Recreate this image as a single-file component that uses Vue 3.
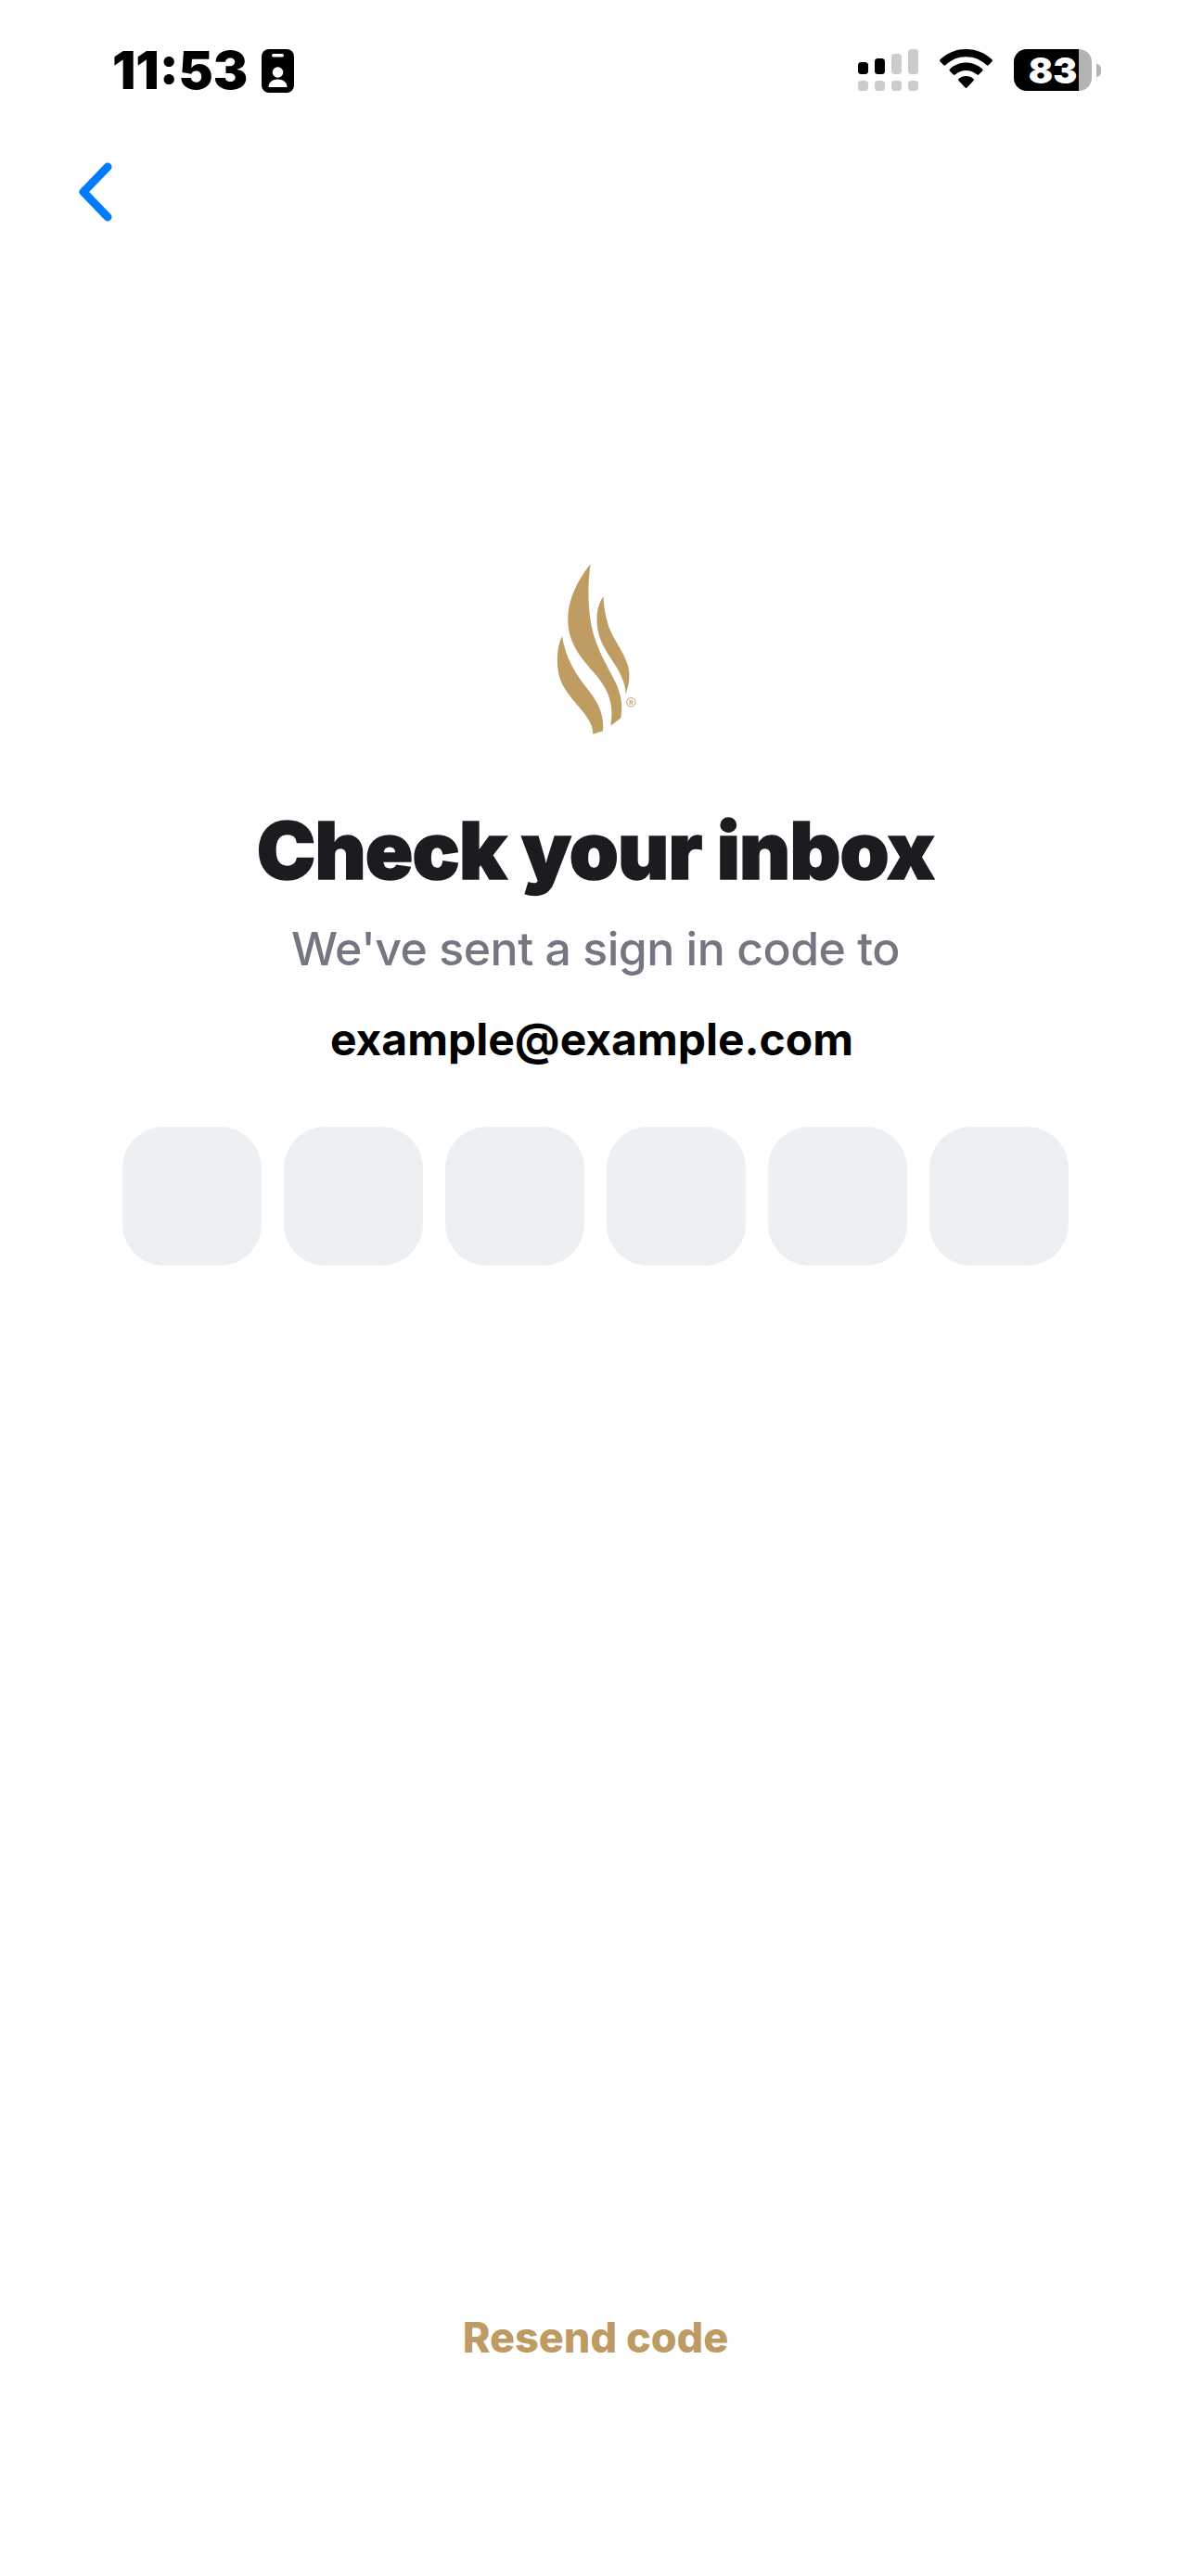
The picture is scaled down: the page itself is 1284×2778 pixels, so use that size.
<script setup>
const boxes = [1, 2, 3, 4, 5, 6]
</script>

<template>
  <div class="page">
    <header class="status">
      <div class="status-left">
        <span class="time">11:53</span>
        <svg class="id-icon" width="35" height="47" viewBox="0 0 35 47">
          <rect width="35" height="47" rx="8" fill="#000" />
          <rect x="11" y="5" width="13" height="3.4" rx="1.7" fill="#fff" />
          <circle cx="17.5" cy="25" r="5.8" fill="#fff" />
          <path d="M7.5 41c0-5.500 4.500-8.500 10-8.500s10 3 10 8.500z" fill="#fff" />
        </svg>
      </div>
      <div class="status-right">
        <svg class="signal" width="65" height="45" viewBox="0 0 65 45">
          <rect x="0" y="14" width="11" height="13" rx="3.500" fill="#000" />
          <rect x="18" y="10" width="11" height="17" rx="3.500" fill="#000" />
          <rect x="36" y="5" width="11" height="22" rx="3.500" fill="#ccc" />
          <rect x="54" y="0" width="11" height="27" rx="3.500" fill="#ccc" />
          <rect x="0" y="34" width="11" height="11" rx="3.500" fill="#ccc" />
          <rect x="18" y="34" width="11" height="11" rx="3.500" fill="#ccc" />
          <rect x="36" y="34" width="11" height="11" rx="3.500" fill="#ccc" />
          <rect x="54" y="34" width="11" height="11" rx="3.500" fill="#ccc" />
        </svg>
        <svg class="wifi" width="57" height="42" viewBox="0 0 57 42">
          <path d="M28.500 0C17.500 0 7.800 4.300 0.500 11.200c-.6.600-.6 1.400 0 2l3.800 4c.6.600 1.400.6 2 0C12.200 11.500 20 8.200 28.500 8.200s16.300 3.300 22.200 9c.6.600 1.400.6 2 0l3.800-4c.6-.6.6-1.400 0-2C49.200 4.300 39.500 0 28.500 0z" fill="#000" />
          <path d="M28.500 14.500c-6.900 0-13 2.700-17.600 7-.6.600-.6 1.300 0 1.900l3.900 4c.5.500 1.300.6 1.900.1 3.100-2.800 7.300-4.600 11.800-4.600s8.700 1.800 11.800 4.600c.6.500 1.400.4 1.900-.1l3.900-4c.6-.6.600-1.300 0-1.900-4.600-4.300-10.700-7-17.600-7z" fill="#000" />
          <path d="M28.500 29c-3.100 0-5.900 1.200-8 3.100-.6.600-.6 1.300 0 1.900l7 7.500c.6.600 1.400.6 2 0l7-7.500c.6-.6.600-1.300 0-1.900-2.100-1.900-4.900-3.100-8-3.100z" fill="#000" />
        </svg>
        <div class="battery">
          <div class="battery-body">
            <div class="battery-fill"></div>
            <span class="battery-num">83</span>
          </div>
          <div class="battery-cap"></div>
        </div>
      </div>
    </header>

    <button class="back" aria-label="Back">
      <svg width="40" height="64" viewBox="0 0 40 64">
        <path d="M34 5 L8 32 L34 59" fill="none" stroke="#007aff" stroke-width="9" stroke-linecap="round" stroke-linejoin="round" />
      </svg>
    </button>

    <main class="content">
      <svg class="logo" width="160" height="220" viewBox="0 0 480 660">
        <path d="M230 55C190 105 155 170 157 240C158 310 200 360 240 405C280 452 308 495 295 578L328 553C334 510 330 480 312 440C290 395 262 350 242 290C222 225 218 130 230 55Z" fill="#be9c62" />
        <path d="M138 288C122 320 118 370 128 415C140 465 185 505 215 545C230 565 238 585 238 605L270 595C274 550 260 510 225 465C185 415 150 365 138 288Z" fill="#be9c62" />
        <path d="M272 160C252 185 246 225 254 270C262 315 290 350 315 390C332 420 345 450 343 477C355 445 360 415 350 380C335 335 305 300 290 260C280 230 272 195 272 160Z" fill="#be9c62" />
        <circle cx="361" cy="502" r="14" fill="none" stroke="#be9c62" stroke-width="3" />
        <text x="361" y="510" text-anchor="middle" class="reg">R</text>
      </svg>
      <h1 class="title">Check your inbox</h1>
      <p class="sub">We've sent a sign in code to</p>
      <p class="email">example@example.com</p>
      <div class="code-row">
        <div v-for="b in boxes" :key="b" class="code-box"></div>
      </div>
    </main>

    <button class="resend">Resend code</button>
  </div>
</template>

<style>
html, body { margin: 0; background: #fff; }
</style>

<style scoped>
.page {
  width: 1284px;
  height: 2778px;
  display: flex;
  flex-direction: column;
  background: #fff;
  font-family: Inter, "Liberation Sans", sans-serif;
  overflow: hidden;
}
.status {
  height: 47px;
  margin-top: 53px;
  padding: 0 97px 0 121px;
  display: flex;
  justify-content: space-between;
  align-items: flex-start;
}
.status-left { display: flex; align-items: flex-start; gap: 15px; }
.time {
  font-size: 56px;
  font-weight: 900;
  line-height: 47px;
  color: #000;
}
.status-right { display: flex; align-items: flex-start; gap: 23px; }
.battery { display: flex; align-items: center; gap: 5px; }
.battery-body {
  position: relative;
  width: 84px;
  height: 45px;
  border-radius: 14px;
  background: #b3b3b3;
}
.battery-fill { width: 70px; height: 100%; background: #000; border-radius: 14px 0 0 14px; }
.battery-num {
  position: absolute;
  left: 0;
  right: 0;
  top: 0;
  text-align: center;
  font-size: 39px;
  font-weight: 900;
  line-height: 45px;
  color: #fff;
}
.battery-cap {
  width: 5px;
  height: 14px;
  background: #b3b3b3;
  border-radius: 0 7px 7px 0;
}
.back {
  align-self: flex-start;
  margin: 75px 0 0 82px;
  padding: 0;
  border: 0;
  background: none;
  display: block;
  line-height: 0;
}
.content {
  display: flex;
  flex-direction: column;
  align-items: center;
  margin-top: 351px;
}
.logo { display: block; margin-right: 4px; }
.reg {
  font-size: 20px;
  font-weight: 600;
  fill: #be9c62;
}
.title {
  margin: 60px 0 0;
  font-size: 85px;
  font-weight: 900;
  line-height: 96px;
  color: #1b1c20;
  letter-spacing: -0.8px;
  -webkit-text-stroke: 1.5px #1b1c20;
}
.sub {
  margin: 27px 0 0;
  font-size: 50px;
  font-weight: 500;
  line-height: 60px;
  color: #747782;
  letter-spacing: -0.5px;
}
.email {
  margin: 38px 0 0;
  font-size: 48px;
  font-weight: 700;
  line-height: 60px;
  color: #000;
  transform: translateX(-4px);
}
.code-row { display: flex; gap: 24px; margin-top: 64px; }
.code-box {
  width: 150px;
  height: 150px;
  border-radius: 45px;
  background: #edf0f3;
}
.resend {
  margin-top: auto;
  margin-bottom: 232px;
  align-self: center;
  padding: 0;
  border: 0;
  background: none;
  font-family: inherit;
  font-size: 45px;
  font-weight: 800;
  line-height: 50px;
  color: #bd9b62;
}
</style>
